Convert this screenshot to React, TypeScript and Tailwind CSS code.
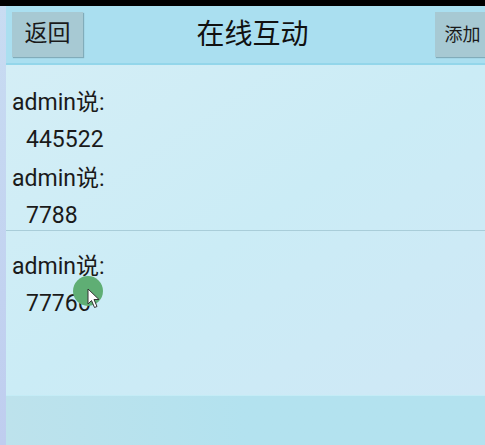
const font = { fontFamily: 'Roboto, "Noto Sans CJK SC", "Noto Sans", sans-serif' };

type Msg = { user: string; text: string };

const messages: Msg[] = [
  { user: "admin", text: "445522" },
  { user: "admin", text: "7788" },
];

function MessageItem({ msg }: { msg: Msg }) {
  return (
    <div className="flex flex-col text-[23px] text-[#1a1a1a]">
      <p className="h-[37px] leading-[37px] pl-[6px]">{msg.user}说:</p>
      <p className="h-[37px] leading-[37px] pl-[20px]">{msg.text}</p>
    </div>
  );
}

export default function App() {
  return (
    <div className="relative flex h-[445px] w-[485px] flex-col overflow-hidden" style={font}>
      <div className="h-[6px] w-full shrink-0 bg-black" />
      <div className="flex flex-1">
        <div className="w-[6px] shrink-0 bg-gradient-to-b from-[#c8dcf2] to-[#bfcdef]" />
        <div className="flex flex-1 flex-col overflow-hidden">
          {/* header */}
          <div className="flex h-[59px] shrink-0 items-start border-b-2 border-[#93d6ea] bg-[#aadff0] pt-[6px] pl-[6px]">
            <button className="h-[45px] w-[71px] shrink-0 bg-[#a7c9d3] text-[23px] text-[#1a1a1a] shadow-[1px_1px_1px_rgba(80,110,120,0.45)]">
              返回
            </button>
            <div className="flex h-[45px] flex-1 items-center justify-center pr-[13px] text-[28px] text-[#111]">
              在线互动
            </div>
            <button className="-mr-[8px] h-[45px] w-[58px] shrink-0 bg-[#a7c9d3] pr-[3px] text-[18px] text-[#1a1a1a] shadow-[1px_1px_1px_rgba(80,110,120,0.45)]">
              添加
            </button>
          </div>
          {/* content */}
          <div className="flex flex-1 flex-col bg-gradient-to-br from-[#d4eef6] via-[#cbecf6] to-[#cfe8f6]">
            <div className="pt-[19px]">
              <div className="mb-[2px]">
                <MessageItem msg={messages[0]} />
              </div>
              <div className="h-[70px] overflow-visible">
                <MessageItem msg={messages[1]} />
              </div>
            </div>
            <div className="h-px w-full bg-[#a9cdd9]" />
            <div className="pt-[17px]">
              <MessageItem msg={{ user: "admin", text: "77766" }} />
            </div>
          </div>
          <div className="h-[50px] shrink-0 border-t border-[#c4ecf6] bg-gradient-to-r from-[#bde2ec] via-[#b3e2ef] to-[#b3e2ef]" />
        </div>
      </div>
      {/* touch indicator */}
      <div className="absolute left-[73px] top-[276px] h-[30px] w-[30px] rounded-full bg-[#5fae74]" />
      <svg className="absolute left-[87px] top-[288px]" width="14" height="22" viewBox="0 0 14 22">
        <path d="M1 1 L1 16 L4.5 12.5 L7.5 19.5 L10 18.5 L7 11.5 L12 11.5 Z" fill="#fff" stroke="#333" strokeWidth="1" strokeLinejoin="round" />
      </svg>
    </div>
  );
}
